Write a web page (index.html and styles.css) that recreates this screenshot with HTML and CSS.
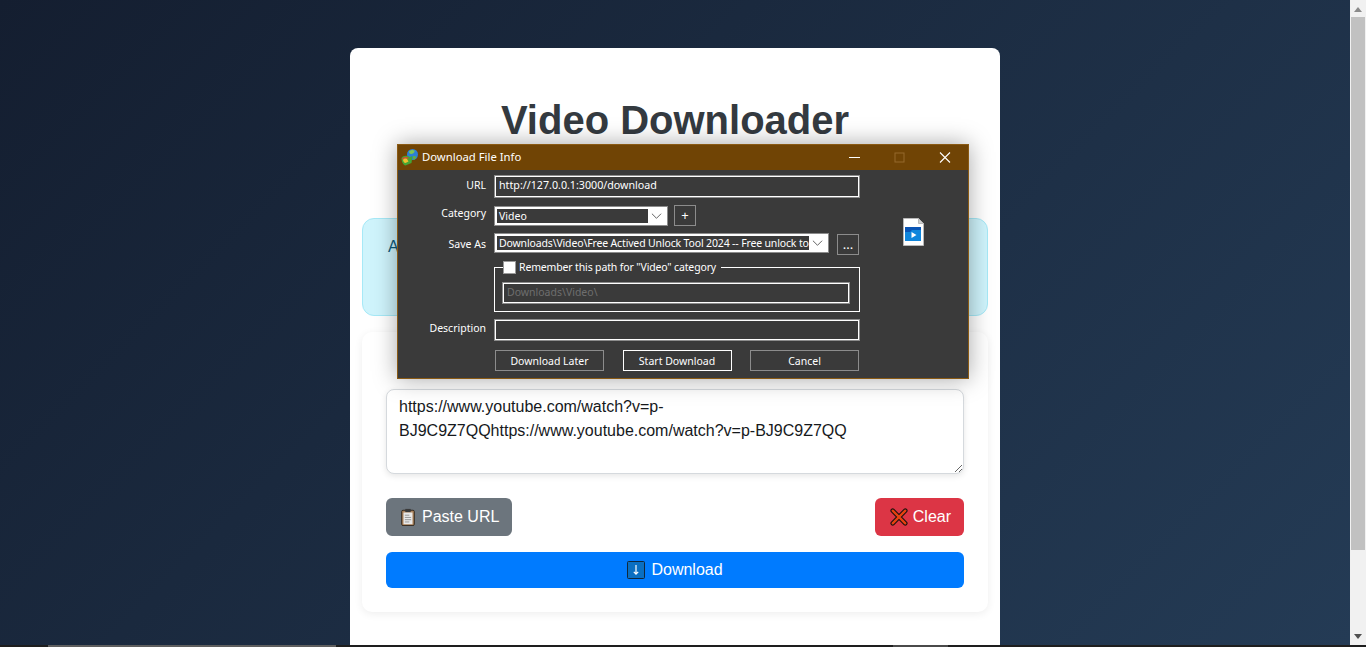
FILE: index.html

```html
<!DOCTYPE html>
<html>
<head>
    <title>Video Downloader</title>
    <link rel="stylesheet" href="styles.css">
</head>
<body>
    <div class="screen">
        <div class="page">
            <div class="container">
                <h1>Video Downloader</h1>
                <div class="alert">A</div>
                <div class="card">
                    <textarea class="url-box" rows="3">https://www.youtube.com/watch?v=p-BJ9C9Z7QQhttps://www.youtube.com/watch?v=p-BJ9C9Z7QQ</textarea>
                    <div class="button-row">
                        <button class="btn btn-grey">
                            <svg class="emoji" viewBox="0 0 16 20"><rect x="1" y="2.5" width="14" height="17" rx="1.5" fill="#a9815a" stroke="#2b2119"/><rect x="3" y="5" width="10" height="13" fill="#e9e9e9"/><rect x="5" y="1" width="6" height="3.5" fill="#3a3a3a"/><path d="M4.5 8h5M4.5 10.5h7M4.5 13h7M4.5 15.5h5" stroke="#8d8d8d"/></svg>
                            Paste URL
                        </button>
                        <button class="btn btn-red">
                            <svg class="emoji" viewBox="0 0 20 20"><path d="M3 3l14 14M17 3L3 17" stroke="#1c1210" stroke-width="5" stroke-linecap="round"/><path d="M3 3l14 14M17 3L3 17" stroke="#e8420f" stroke-width="2.6" stroke-linecap="round"/></svg>
                            Clear
                        </button>
                    </div>
                    <button class="btn btn-blue">
                        <svg class="emoji" viewBox="0 0 18 18"><rect x="0.5" y="0.5" width="17" height="17" rx="1" fill="#0a6fc2" stroke="#10283c"/><path d="M9 4v9M6.800 10.800L9 13.200l2.200-2.400" fill="none" stroke="#fff" stroke-width="1.200"/></svg>
                        Download
                    </button>
                </div>
            </div>
        </div>
        <div class="scrollbar">
            <div class="arrow-up"></div>
            <div class="thumb"></div>
            <div class="arrow-down"></div>
        </div>

        <div class="dialog">
            <div class="titlebar">
                <svg class="app-icon" viewBox="0 0 17 17">
                    <circle cx="11.500" cy="5.500" r="5.500" fill="#2c7fd6"/>
                    <path d="M8 2.500c1.500-1.800 4-2 5.500-1 .5 1.500-1 3-3 3.500-1.500.3-2.500-1-2.500-2.500z" fill="#7cc653"/>
                    <path d="M12 7c1.500 0 3 .3 3.500 1-1 2-2.500 3-3.500 2.500z" fill="#5fae48"/>
                    <path d="M0.500 9C2 6.500 6 6 9 8l2.500-1-1 7-6 2.500C2 16 .3 12 .5 9z" fill="#44a536"/>
                    <path d="M1 9.500C3 7.500 6 7.500 8 9l-2 1c-1.500-.7-3-.5-4 1z" fill="#e2432f"/>
                    <path d="M2 11c1-1.500 2.500-1.700 4-1l1.500 2.500-3 1.500C3 13.800 2.300 12.500 2 11z" fill="#eec12f"/>
                </svg>
                <span class="title-text">Download File Info</span>
                <div class="win-buttons">
                    <svg viewBox="0 0 45 25"><path d="M17 12.500h11" stroke="#fff"/></svg>
                    <svg viewBox="0 0 45 25"><rect x="18" y="8" width="9" height="9" fill="none" stroke="#94682c"/></svg>
                    <svg viewBox="0 0 45 25"><path d="M18 7.500l10 10M28 7.500l-10 10" stroke="#fff" stroke-width="1.100"/></svg>
                </div>
            </div>
            <div class="dialog-body">
                <div class="form">
                    <div class="row row-url">
                        <label>URL</label>
                        <div class="field field-url">http://127.0.0.1:3000/download</div>
                    </div>
                    <div class="row row-category">
                        <label>Category</label>
                        <div class="combo combo-short">
                            <span class="combo-text">Video</span>
                            <svg class="chevron" viewBox="0 0 12 8"><path d="M1 1.500l5 5 5-5" fill="none" stroke="#555"/></svg>
                        </div>
                        <div class="small-btn">+</div>
                    </div>
                    <div class="row row-save">
                        <label>Save As</label>
                        <div class="combo combo-long">
                            <span class="combo-text">Downloads\Video\Free Actived Unlock Tool 2024 -- Free unlock tool</span>
                            <svg class="chevron" viewBox="0 0 12 8"><path d="M1 1.500l5 5 5-5" fill="none" stroke="#555"/></svg>
                        </div>
                        <div class="small-btn dots">...</div>
                    </div>
                    <div class="group">
                        <div class="group-legend">
                            <span class="checkbox"></span>
                            <span class="legend-text">Remember this path for "Video" category</span>
                        </div>
                        <div class="field field-disabled">Downloads\Video\</div>
                    </div>
                    <div class="row row-desc">
                        <label>Description</label>
                        <div class="field"></div>
                    </div>
                    <div class="actions">
                        <div class="action">Download Later</div>
                        <div class="action action-main">Start Download</div>
                        <div class="action">Cancel</div>
                    </div>
                </div>
                <div class="file-icon">
                    <svg viewBox="0 0 21 28">
                        <path d="M0.500 0.500h15l5 5v22h-20z" fill="#fff" stroke="#b9b9b9"/>
                        <path d="M15.500 0.500v5h5z" fill="#cfcfcf" stroke="#b9b9b9"/>
                        <rect x="2" y="9" width="16" height="14" fill="#0f86dc"/>
                        <path d="M2 9h16v3H9l-2 2H2z" fill="#0a55b5"/>
                        <path d="M8.500 14v6l5-3z" fill="#fff"/>
                    </svg>
                </div>
            </div>
        </div>
    </div>
    <div class="taskbar">
        <div class="task task-one"></div>
        <div class="task task-two"></div>
    </div>
</body>
</html>
```

FILE: styles.css

```css
html, body {
    margin: 0;
    height: 100%;
    overflow: hidden;
}

body {
    display: flex;
    flex-direction: column;
    font-family: "Liberation Sans", Arial, sans-serif;
    background-color: #1e1e1e;
}

.screen {
    position: relative;
    display: flex;
    flex: 1;
    min-height: 0;
}

.page {
    flex: 1;
    padding-top: 48px;
    background: linear-gradient(135deg, #141e30, #243b55);
}

.container {
    box-sizing: border-box;
    width: 650px;
    height: 100%;
    margin: 0 auto;
    padding: 48px 12px 0;
    background-color: #fff;
    border-radius: 8px 8px 0 0;
}

h1 {
    margin: 0 0 74px;
    font-size: 40px;
    line-height: 48px;
    text-align: center;
    color: #343a40;
}

.alert {
    box-sizing: border-box;
    height: 98px;
    padding: 16px 25px;
    margin-bottom: 16px;
    font-size: 16px;
    line-height: 24px;
    color: #0c5a7a;
    background-color: #cff4fc;
    border: 1px solid #a6e9f7;
    border-radius: 12px;
}

.card {
    box-sizing: border-box;
    height: 280px;
    padding: 57px 24px 24px;
    border-radius: 10px;
    box-shadow: 0 2px 8px rgba(0, 0, 0, 0.07);
}

.url-box {
    display: block;
    box-sizing: border-box;
    width: 100%;
    height: 85px;
    padding: 5px 12px;
    font-family: "Liberation Sans", Arial, sans-serif;
    font-size: 16px;
    line-height: 24px;
    color: #16191c;
    border: 1px solid #d5d9dd;
    border-radius: 8px;
    box-shadow: 0 2px 6px rgba(0, 0, 0, 0.1);
    outline: none;
}

.button-row {
    display: flex;
    justify-content: space-between;
    margin: 24px 0 16px;
}

.btn {
    display: flex;
    align-items: center;
    justify-content: center;
    gap: 4px;
    height: 38px;
    padding: 0 13px 0 12px;
    font-family: "Liberation Sans", Arial, sans-serif;
    font-size: 16px;
    color: #fff;
    border: none;
    border-radius: 6px;
}

.btn-grey {
    background-color: #6c757d;
}

.btn-red {
    padding-left: 14px;
    background-color: #dc3545;
}

.btn-blue {
    width: 100%;
    height: 36px;
    gap: 5px;
    background-color: #007bff;
}

.emoji {
    width: 20px;
    height: 18px;
}

.scrollbar {
    display: flex;
    flex-direction: column;
    align-items: center;
    width: 16px;
    background-color: #f1f1f1;
}

.arrow-up {
    margin: 7px 0 5px;
    border: 4px solid transparent;
    border-top: 0;
    border-bottom: 5px solid #8a8a8a;
}

.thumb {
    width: 14px;
    height: 533px;
    background-color: #c1c1c1;
}

.arrow-down {
    margin-top: auto;
    margin-bottom: 6px;
    border: 4px solid transparent;
    border-bottom: 0;
    border-top: 5px solid #505050;
}

.taskbar {
    position: relative;
    height: 2px;
    background-color: #1e1e1e;
}

.task {
    position: absolute;
    top: 0;
    height: 2px;
}

.task-one {
    left: 48px;
    width: 288px;
    background-color: #5e5e5e;
}

.task-two {
    left: 893px;
    width: 55px;
    background-color: #4a4a4a;
}

/* download window on top of the page */
.dialog {
    position: absolute;
    left: 397px;
    top: 144px;
    box-sizing: border-box;
    width: 572px;
    height: 235px;
    font-family: "Noto Sans", Tahoma, sans-serif;
    font-size: 10.500px;
    color: #fff;
    background-color: #3a3a3a;
    border: 1px solid #8a5a14;
    box-shadow: 0 0 22px rgba(0, 0, 0, 0.35);
}

.titlebar {
    display: flex;
    align-items: center;
    height: 25px;
    background-color: #704405;
}

.app-icon {
    width: 17px;
    height: 17px;
    margin: 0 4px 0 3px;
}

.title-text {
    margin-bottom: 2px;
    font-size: 11.300px;
}

.win-buttons {
    display: flex;
    margin-left: auto;
    margin-right: 1px;
}

.win-buttons svg {
    display: block;
    width: 45px;
    height: 25px;
}

.dialog-body {
    display: flex;
}

.form {
    width: 462px;
    padding-left: 96px;
    box-sizing: border-box;
}

.row {
    position: relative;
    display: flex;
    align-items: flex-start;
}

.row label {
    position: absolute;
    right: 100%;
    margin-right: 8px;
    white-space: nowrap;
}

.row-url {
    margin-top: 5px;
}

.row-url label {
    top: 3px;
}

.row-category {
    margin-top: 7px;
    gap: 6px;
}

.row-category label {
    top: 1px;
}

.row-save {
    margin-top: 7px;
    gap: 8px;
}

.row-save label {
    top: 4px;
}

.row-desc {
    margin-top: 7px;
}

.row-desc label {
    top: 2px;
}

.field {
    box-sizing: border-box;
    width: 364px;
    height: 20px;
    margin: 1px;
    padding: 0 3px;
    line-height: 16px;
    background-color: #3a3a3a;
    border: 1px solid #fff;
    outline: 1px solid #8c8c8c;
}

.field-url {
    height: 21px;
    font-size: 10.700px;
}

.field-disabled {
    width: 346px;
    line-height: 17px;
    color: #6e6e6e;
}

.combo {
    display: flex;
    align-items: center;
    box-sizing: border-box;
    height: 20px;
    padding: 2px;
    background-color: #fff;
    border: 1px solid #8c8c8c;
}

.row-category .combo {
    margin-top: 1px;
}

.combo-short {
    width: 174px;
}

.combo-long {
    width: 335px;
}

.combo-text {
    flex: 1;
    min-width: 0;
    height: 100%;
    padding-left: 2px;
    overflow: hidden;
    white-space: nowrap;
    line-height: 14px;
    background-color: #3a3a3a;
}

.combo-long .combo-text {
    letter-spacing: -0.150px;
}

.chevron {
    width: 11px;
    height: 8px;
    margin: 0 3px;
}

.small-btn {
    box-sizing: border-box;
    width: 22px;
    height: 21px;
    font-size: 13px;
    line-height: 18px;
    text-align: center;
    border: 1px solid #8c8c8c;
}

.dots {
    margin-top: 1px;
    line-height: 19px;
}

.group {
    box-sizing: border-box;
    width: 366px;
    height: 45px;
    margin-top: 12px;
    padding: 14px 0 0 7px;
    border: 1px solid #fff;
    position: relative;
}

.group-legend {
    position: absolute;
    left: 8px;
    top: -8px;
    display: flex;
    align-items: center;
    gap: 3px;
    padding-right: 5px;
    background-color: #3a3a3a;
}

.legend-text {
    letter-spacing: -0.150px;
}

.checkbox {
    box-sizing: border-box;
    width: 13px;
    height: 13px;
    background-color: #fff;
    border: 1px solid #9a9a9a;
}

.actions {
    display: flex;
    justify-content: space-between;
    width: 364px;
    margin: 9px 0 0 1px;
}

.action {
    box-sizing: border-box;
    width: 109px;
    height: 21px;
    line-height: 20px;
    text-align: center;
    border: 1px solid #8c8c8c;
}

.action-main {
    border-color: #fff;
}

.file-icon {
    margin: 48px 0 0 43px;
}

.file-icon svg {
    display: block;
    width: 21px;
    height: 28px;
}
```
